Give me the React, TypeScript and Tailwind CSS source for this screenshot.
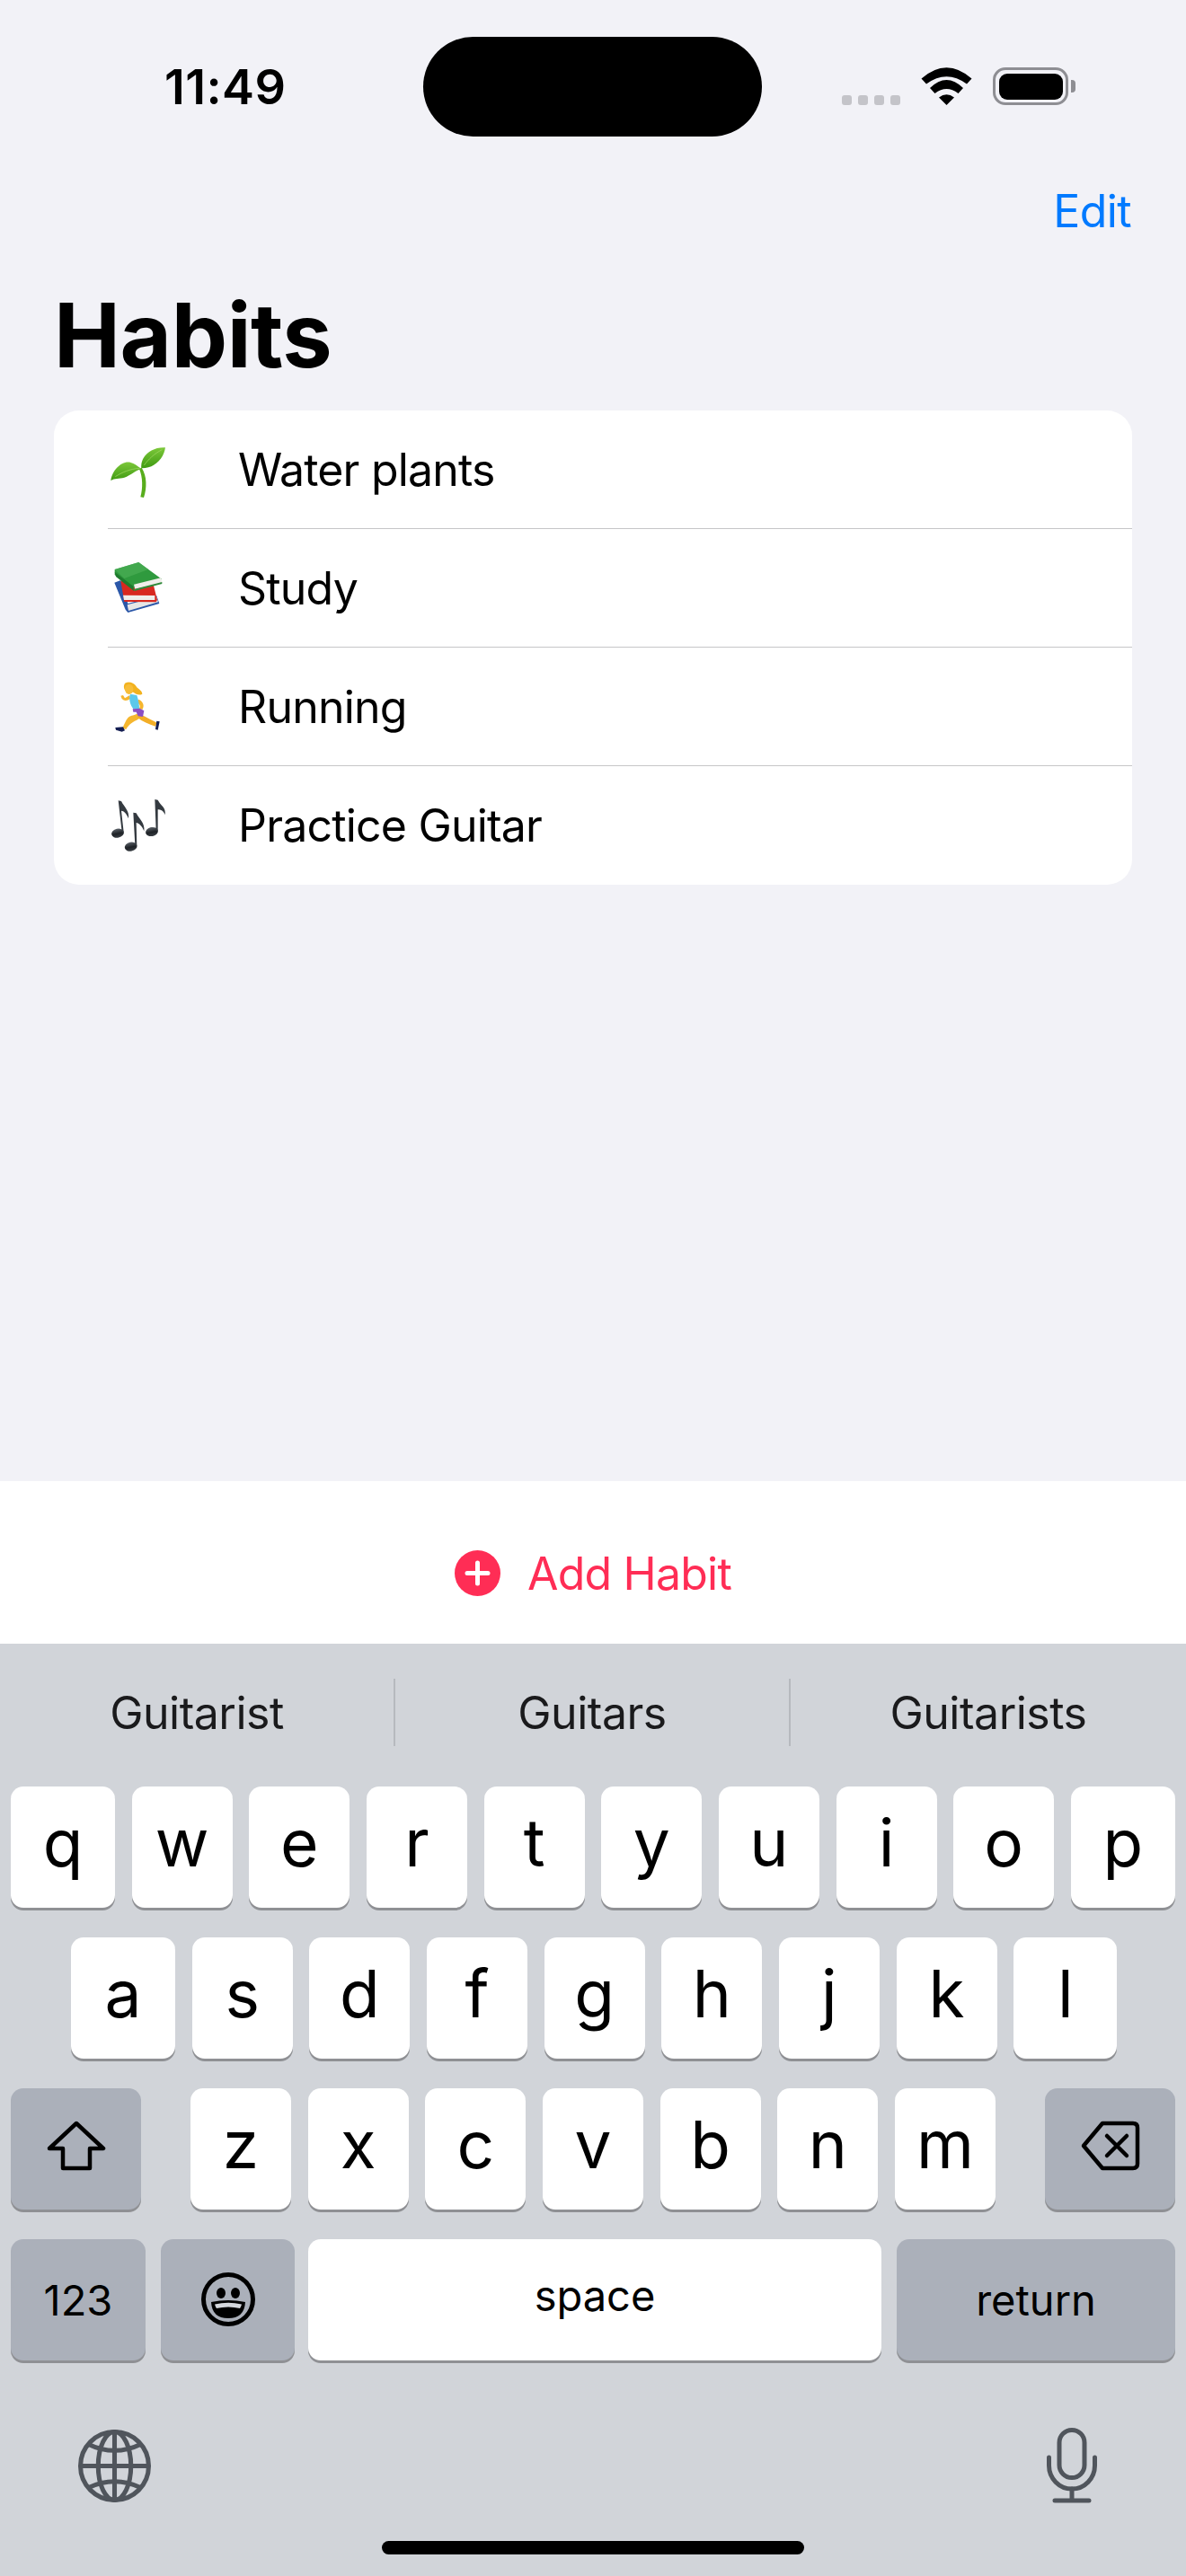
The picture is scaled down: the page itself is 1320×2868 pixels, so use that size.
import React from "react";

function Sprout() {
  return (
    <svg viewBox="0 -21 240 240" className="w-[80px] h-[80px] -ml-[5px] shrink-0">
      <defs>
        <linearGradient id="leaf" x1="0" y1="0" x2="0" y2="1">
          <stop offset="0" stopColor="#7cc83a" />
          <stop offset="1" stopColor="#3f9a12" />
        </linearGradient>
      </defs>
      <path d="M128 92 C146 120 146 160 135 192 L124 190 C132 160 132 125 120 96 Z" fill="#58ad1d" />
      <path d="M25 135 C30 95 70 60 100 78 C112 84 120 92 128 96 C108 100 92 118 70 125 C52 130 38 126 25 135 Z" fill="url(#leaf)" />
      <path d="M127 94 C122 55 160 22 207 25 C202 62 170 95 127 94 Z" fill="url(#leaf)" />
      <path d="M40 122 C62 108 88 96 122 94 M136 84 C150 65 170 45 196 32" stroke="#a6dc6a" strokeWidth="2" fill="none" />
    </svg>
  );
}

function Books() {
  return (
    <svg viewBox="0 375 240 240" className="w-[80px] h-[80px] -ml-[5px] shrink-0">
      <path d="M37 476 L58 468 L82 546 L178 520 L187 546 L82 576 L74 566 Z" fill="#2b57a8" />
      <path d="M80 550 L178 524 L183 541 L84 570 Z" fill="#e6e6e6" />
      <path d="M58 470 L168 486 L180 534 L176 541 L70 540 Z" fill="#d8281f" />
      <path d="M66 518 L172 519 L172 534 L69 534 Z" fill="#f0eeea" />
      <path d="M38 432 L118 408 L195 464 L102 494 L38 450 Z" fill="#2f9a3e" />
      <path d="M38 432 L118 408 L150 432 L70 462 Z" fill="#4aae55" opacity="0.7" />
      <path d="M38 440 L100 488 L102 504 L42 456 Z" fill="#1f7a2e" />
      <path d="M102 482 L192 460 L197 476 L106 498 Z" fill="#f0eeea" />
      <path d="M102 498 L196 474 L196 480 L104 504 Z" fill="#2f8a3a" />
    </svg>
  );
}

function Runner() {
  return (
    <svg viewBox="0 -9 240 240" className="w-[80px] h-[80px] -ml-[5px] shrink-0">
      <path d="M112 134 C100 140 88 140 82 148 C74 158 70 170 64 182 L76 186 C86 170 96 162 110 156 C122 150 128 146 130 136 Z" fill="#f5b62e" />
      <path d="M124 136 C136 142 156 152 178 164 L174 176 C152 168 130 160 114 146 Z" fill="#f3ae27" />
      <path d="M40 180 L66 178 L72 190 L62 194 L42 188 Z" fill="#141e52" />
      <path d="M178 158 L188 160 L182 188 L174 186 Z" fill="#141e52" />
      <path d="M90 84 C78 92 70 92 62 84 L58 74 L66 72 L72 82 L88 72 Z" fill="#f5b62e" />
      <path d="M118 86 C130 92 140 104 130 120 L120 116 C126 106 118 100 112 96 Z" fill="#f5b62e" />
      <path d="M90 68 L112 72 C118 90 120 104 120 118 L100 118 C90 104 84 86 90 68 Z" fill="#5cc8ea" />
      <path d="M98 118 L122 116 L136 124 L132 144 L116 142 L110 128 L100 128 Z" fill="#8b4fc4" />
      <path d="M72 32 C86 24 104 30 112 46 C118 52 130 58 130 68 C120 74 108 68 100 62 L78 62 C68 54 66 42 72 32 Z" fill="#f2b21f" />
      <ellipse cx="86" cy="52" rx="14" ry="17" fill="#f7bd38" />
    </svg>
  );
}

function Notes() {
  const note = (hx: number, hy: number, tx: number, ty: number, fx: number, fy: number) => (
    <g>
      <ellipse cx={hx} cy={hy} rx="21" ry="15" fill="url(#noteFill)" transform={`rotate(-12 ${hx} ${hy})`} />
      <path d={`M${hx + 14} ${hy - 4} L${tx} ${ty} L${tx + 10} ${ty + 2} C${tx + 20} ${ty + 22} ${fx + 4} ${fy - 26} ${fx} ${fy} C${fx - 6} ${fy - 16} ${tx + 18} ${ty + 34} ${tx + 10} ${ty + 34} L${hx + 20} ${hy - 4} Z`} fill="#343a40" />
    </g>
  );
  return (
    <svg viewBox="0 387 240 240" className="w-[80px] h-[80px] -ml-[5px] shrink-0">
      <defs>
        <linearGradient id="noteFill" x1="0" y1="0" x2="0" y2="1">
          <stop offset="0" stopColor="#5b6168" />
          <stop offset="0.55" stopColor="#1e2226" />
          <stop offset="1" stopColor="#3a3f45" />
        </linearGradient>
      </defs>
      {note(48, 533, 50, 424, 84, 484)}
      {note(92, 578, 100, 464, 136, 526)}
      {note(162, 528, 172, 420, 206, 472)}
    </svg>
  );
}

function Wifi() {
  return (
    <svg viewBox="0 0 57 42" className="w-[57px] h-[42px] shrink-0" fill="#000">
      <path d="M0.5 12.5 Q28.5 -12 56.5 12.5 L51 18.5 Q28.5 2 6 18.5 Z" />
      <path d="M10 23 Q28.5 5 47 23 L41.5 29 Q28.5 19 15.5 29 Z" />
      <path d="M20 33.5 Q28.5 27 37 33.5 L28.5 42 Z" />
    </svg>
  );
}

const keyBase = "h-[135px] rounded-[14px] shadow-[0_3px_0_#8f9094] flex items-center justify-center shrink-0";
const white = keyBase + " bg-white";
const dark = keyBase + " bg-[#abb0ba]";

function Letter({ c, w = "w-[112px]" }: { c: string; w?: string }) {
  return (
    <div className={`${white} ${w} pb-[10px] text-[73px] font-[380] leading-none text-black`}>{c}</div>
  );
}

const rows = [
  { emoji: <Sprout />, label: "Water plants" },
  { emoji: <Books />, label: "Study" },
  { emoji: <Runner />, label: "Running" },
  { emoji: <Notes />, label: "Practice Guitar" },
];

export default function App() {
  return (
    <div className="w-[1320px] h-[2868px] flex flex-col bg-[#f2f2f7] overflow-hidden [font-family:Inter,sans-serif] text-black">
      {/* status bar */}
      <div className="flex h-[111px] mt-[41px]">
        <div className="w-[471px] pl-[183px] flex items-center text-[54px] tracking-[0.4px] font-semibold leading-none">11:49</div>
        <div className="w-[377px] h-[111px] rounded-full bg-black" />
        <div className="flex-1 pl-[89px] pt-[34px]">
          <div className="flex items-end h-[42px]">
            <div className="flex gap-[7px] w-[65px] mr-[23px]">
              <div className="w-[11px] h-[11px] rounded-[3px] bg-[#c4c4c9]" />
              <div className="w-[11px] h-[11px] rounded-[3px] bg-[#c4c4c9]" />
              <div className="w-[11px] h-[11px] rounded-[3px] bg-[#c4c4c9]" />
              <div className="w-[11px] h-[11px] rounded-[3px] bg-[#c4c4c9]" />
            </div>
            <Wifi />
            <div className="ml-[23px] w-[84px] h-[42px] rounded-[14px] border-[3.5px] border-[#8e8e93] p-[3.5px]">
              <div className="w-full h-full rounded-[9px] bg-black" />
            </div>
            <div className="ml-[3px] mb-[14px] w-[5px] h-[14px] rounded-r-[4px] bg-[#8e8e93]" />
          </div>
        </div>
      </div>

      {/* nav */}
      <div className="mt-[53px] pr-[61px] flex justify-end text-[50px] tracking-[-0.6px] leading-[60px] text-[#007aff]">Edit</div>
      <div className="mt-[53px] pl-[60px] text-[99px] leading-[110px] font-bold tracking-[-0.4px]">Habits</div>

      {/* list */}
      <div className="mt-[29px] mx-[60px] bg-white rounded-[28px] overflow-hidden">
        {rows.map((r, i) => (
          <div key={r.label} className="h-[132px] pl-[60px]">
            <div className={`h-full flex items-center ${i < 3 ? "border-b-[1.5px] border-[#c6c6c8]" : ""}`}>
              {r.emoji}
              <span className="ml-[70px] text-[50px] tracking-[-0.8px] leading-none">{r.label}</span>
            </div>
          </div>
        ))}
      </div>

      <div className="flex-1" />

      {/* add bar */}
      <div className="h-[181px] bg-white pt-[24px] flex items-center justify-center text-[#ff2d55]">
        <svg viewBox="0 0 51 51" className="w-[51px] h-[51px] shrink-0">
          <circle cx="25.5" cy="25.5" r="25.5" fill="#ff2d55" />
          <path d="M25.5 14 V37 M14 25.5 H37" stroke="#fff" strokeWidth="5" strokeLinecap="round" />
        </svg>
        <span className="ml-[30px] text-[50px] tracking-[-0.8px] leading-none">Add Habit</span>
      </div>

      {/* keyboard */}
      <div className="h-[1038px] bg-[#d1d4d9] pt-[39px] flex flex-col">
        <div className="flex h-[75px] text-[50px] tracking-[-0.5px] leading-none text-[#1a1a1c]">
          <div className="w-[440px] flex items-center justify-center border-r-2 border-[#b6b9be]">Guitarist</div>
          <div className="w-[440px] flex items-center justify-center border-r-2 border-[#b6b9be]">Guitars</div>
          <div className="w-[440px] flex items-center justify-center">Guitarists</div>
        </div>

        <div className="mt-[45px] px-[12px] flex gap-[18.67px]">
          {"qwertyuiop".split("").map((c, i) => (
            <Letter key={c} c={c} w={i === 0 || i === 9 ? "w-[116px]" : "w-[112px]"} />
          ))}
        </div>

        <div className="mt-[33px] pl-[79px] flex gap-[18.67px]">
          {"asdfghjkl".split("").map((c, i) => (
            <Letter key={c} c={c} w={i === 0 ? "w-[116px]" : i === 8 ? "w-[115px]" : "w-[112px]"} />
          ))}
        </div>

        <div className="mt-[33px] px-[12px] flex justify-between">
          <div className={`${dark} w-[145px]`}>
            <svg viewBox="0 0 66 56" className="w-[66px] h-[56px] mb-[8px]" fill="none" stroke="#000" strokeWidth="4.5" strokeLinejoin="round">
              <path d="M33 3 L63 31 H48 V53 H18 V31 H3 Z" />
            </svg>
          </div>
          <div className="flex gap-[18.67px]">
            {"zxcvbnm".split("").map((c) => (
              <Letter key={c} c={c} />
            ))}
          </div>
          <div className={`${dark} w-[145px]`}>
            <svg viewBox="0 0 66 56" className="w-[66px] h-[56px] mb-[8px]" fill="none" stroke="#000" strokeWidth="4.5" strokeLinejoin="round" strokeLinecap="round">
              <path d="M3 28 L24 3 H58 Q63 3 63 8 V48 Q63 53 58 53 H24 Z" />
              <path d="M29 17 L51 39 M51 17 L29 39" strokeWidth="4.5" />
            </svg>
          </div>
        </div>

        <div className="mt-[33px] pl-[12px] flex">
          <div className={`${dark} w-[150px] text-[47px] leading-none`}>123</div>
          <div className={`${dark} w-[149px] ml-[17px]`}>
            <svg viewBox="0 0 60 60" className="w-[60px] h-[60px] mb-[2px]">
              <circle cx="30" cy="30" r="27.5" fill="none" stroke="#000" strokeWidth="5" />
              <ellipse cx="22" cy="23" rx="5" ry="6" fill="#000" />
              <ellipse cx="38" cy="23" rx="5" ry="6" fill="#000" />
              <path d="M11 33 Q30 29 49 33 Q48 51 30 51 Q12 51 11 33 Z" fill="#000" />
              <path d="M15 35.5 Q30 32 45 35.5 Q44 39 43 40 Q30 37 17 40 Q16 39 15 35.5 Z" fill="#d5d8dd" />
            </svg>
          </div>
          <div className={`${white} w-[638px] ml-[15px] pb-[10px] text-[47px] leading-none`}>space</div>
          <div className={`${dark} w-[310px] ml-[17px] text-[47px] leading-none`}>return</div>
        </div>

        <div className="mt-[75px] pl-[87px] pr-[99px] flex justify-between items-center h-[84px]">
          <svg viewBox="0 0 80 80" className="w-[81px] h-[81px]" fill="none" stroke="#50555c" strokeWidth="5">
            <circle cx="40" cy="40" r="37.5" />
            <ellipse cx="40" cy="40" rx="18" ry="37.5" />
            <path d="M40 2.5 V77.5 M2.5 40 H77.5" />
            <path d="M11 16 Q40 30 69 16 M11 64 Q40 50 69 64" />
          </svg>
          <svg viewBox="0 0 56 84" className="w-[56px] h-[84px]" fill="none" stroke="#50555c" strokeWidth="5" strokeLinecap="round">
            <rect x="14" y="2.5" width="28" height="53" rx="14" />
            <path d="M2.5 33 V42 A25.5 26 0 0 0 53.5 42 V33" />
            <path d="M28 68 V80 M9 81 H47" />
          </svg>
        </div>

        <div className="mt-[42px] mx-auto w-[470px] h-[15px] rounded-full bg-black" />
      </div>
    </div>
  );
}
